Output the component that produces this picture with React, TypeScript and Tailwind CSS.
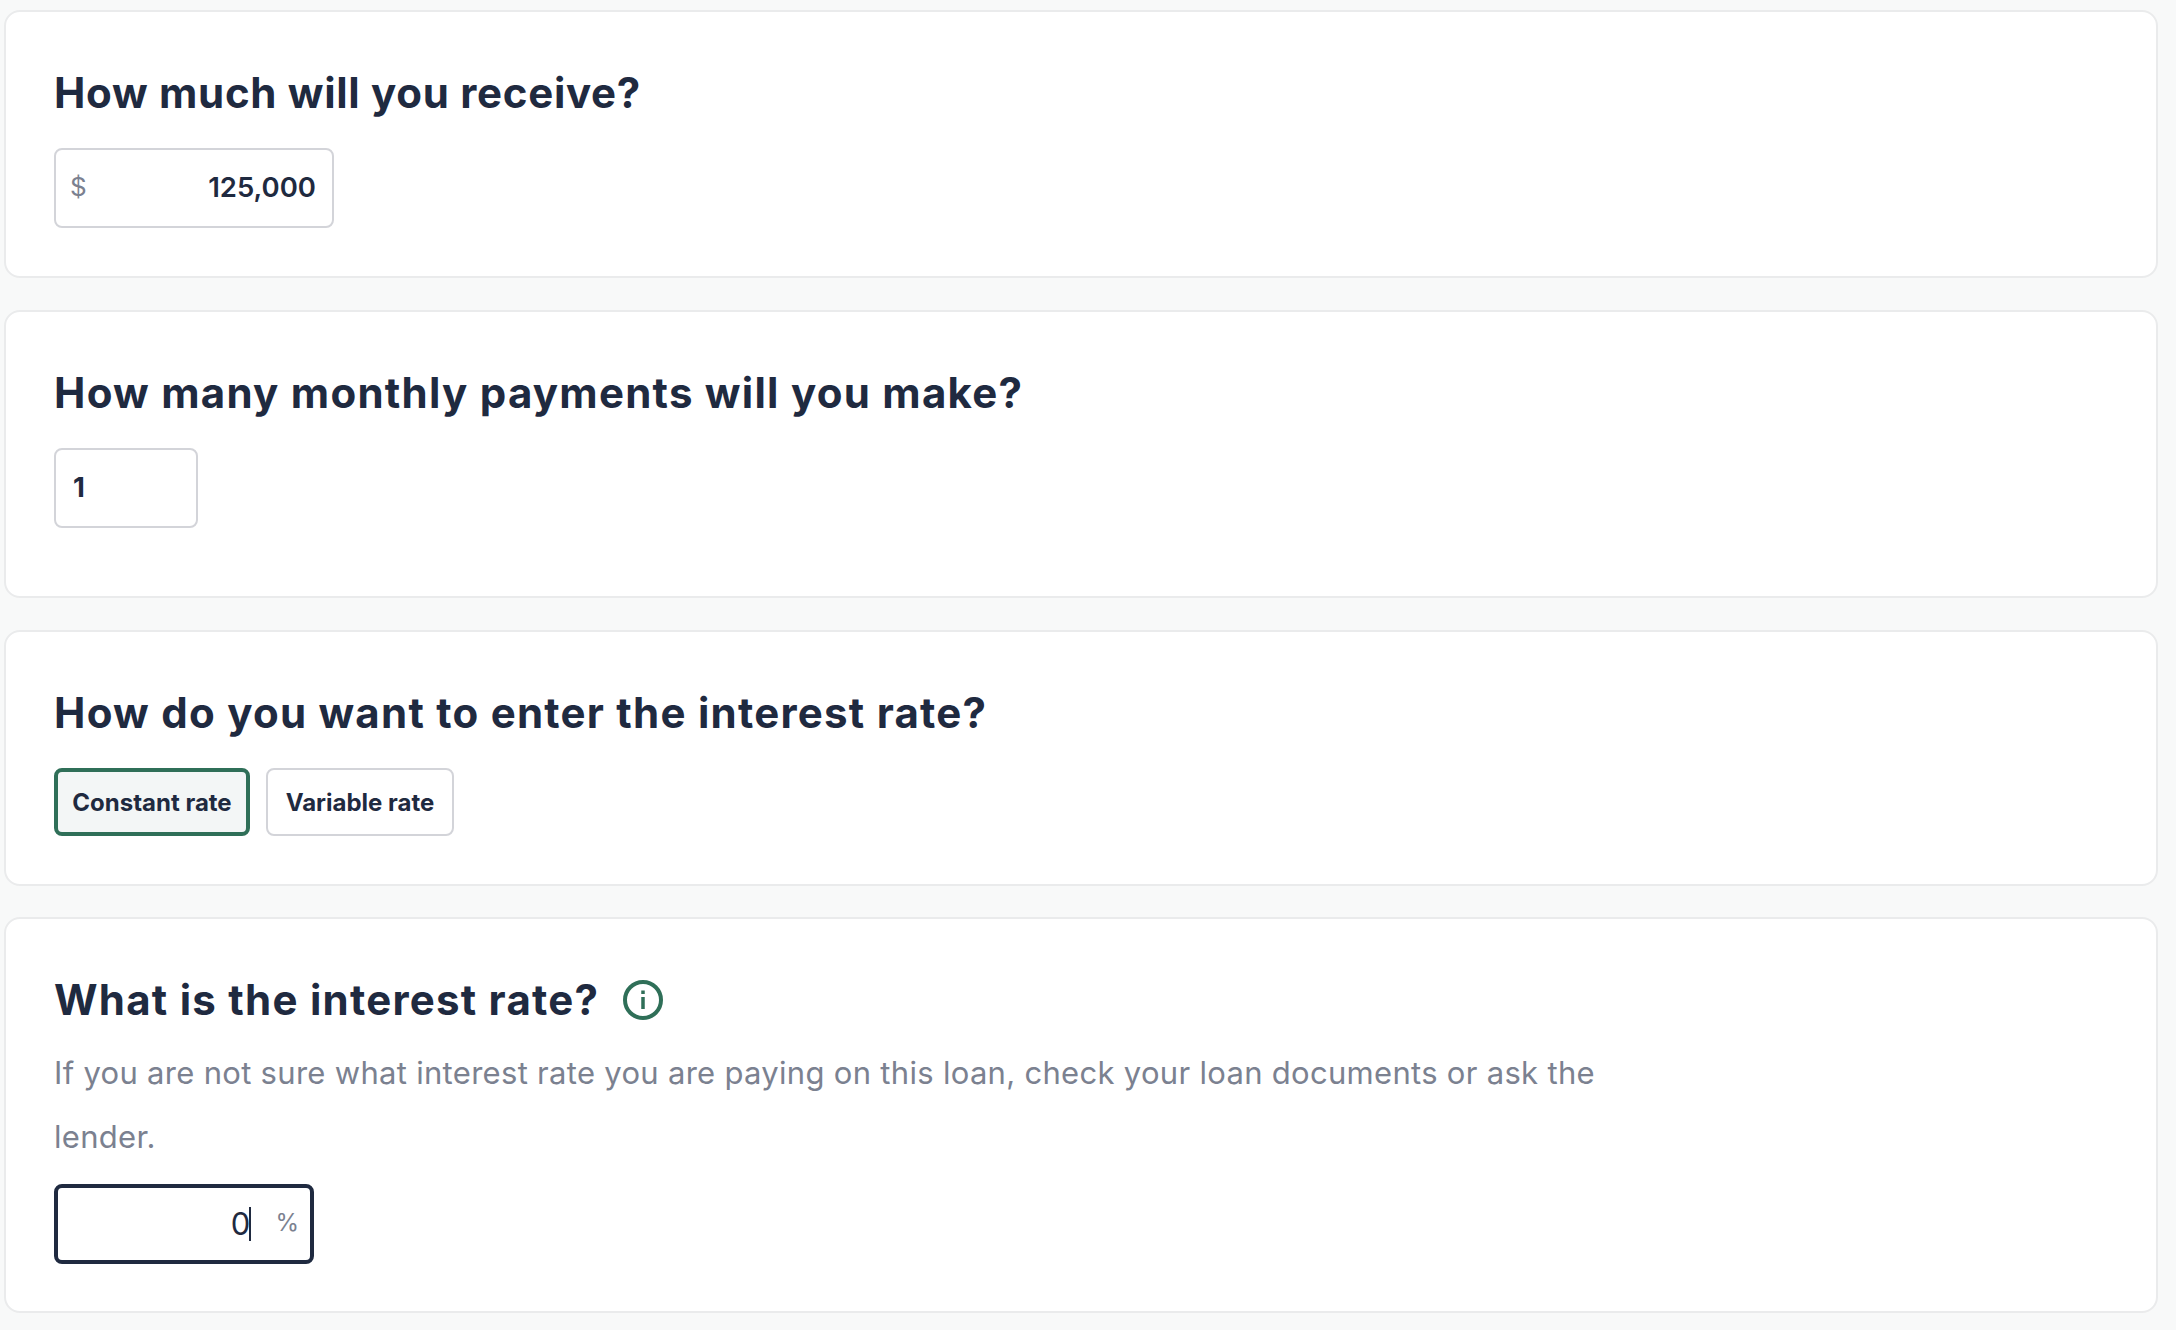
import React from "react";

const font = "font-['Inter','Noto_Sans',sans-serif]";

const Heading: React.FC<{ children: React.ReactNode; tight?: boolean }> = ({ children, tight }) => (
  <h2 className={`text-[42px] leading-[60px] font-bold text-[#1f2a40] ${tight ? "tracking-[0.7px]" : "tracking-[1.25px]"}`}>
    {children}
  </h2>
);

const Card: React.FC<{ className: string; children: React.ReactNode }> = ({ className, children }) => (
  <section className={`rounded-2xl border-2 border-[#eaebec] bg-white pt-[51px] pl-[48px] ${className}`}>{children}</section>
);

export default function App() {
  return (
    <div className={`min-h-screen bg-[#f8f9f9] pt-[10px] pr-[18px] pl-[4px] pb-[16px] ${font}`}>
      <div className="flex flex-col gap-[32px]">
        <Card className="h-[268px]">
          <Heading tight>How much will you receive?</Heading>
          <div className="mt-[25px] flex h-[80px] w-[280px] items-center justify-between rounded-lg border-2 border-[#d3d4d9] pr-[16px] pl-[14px]">
            <span className="mt-[-3px] text-[26px] text-[#7b8190]">$</span>
            <input
              readOnly
              value="125,000"
              className="w-[170px] text-right text-[27.5px] font-semibold text-[#1f2a40] outline-none"
            />
          </div>
        </Card>

        <Card className="h-[288px]">
          <Heading>How many monthly payments will you make?</Heading>
          <div className="mt-[25px] flex h-[80px] w-[144px] items-center rounded-lg border-2 border-[#d3d4d9] pl-[17px]">
            <input readOnly value="1" className="w-full text-[27.5px] font-bold text-[#1f2a40] outline-none" />
          </div>
        </Card>

        <Card className="mb-[-1px] h-[256px]">
          <Heading>How do you want to enter the interest rate?</Heading>
          <div className="mt-[25px] flex gap-[16px]">
            <button className="h-[68px] w-[196px] rounded-lg border-4 border-[#2f6f58] bg-[#f3f6f6] pt-[2px] text-[24px] font-bold text-[#1f2a40]">
              Constant rate
            </button>
            <button className="h-[68px] w-[188px] rounded-lg border-2 border-[#d3d4d9] bg-white pt-[2px] text-[24px] font-bold text-[#1f2a40]">
              Variable rate
            </button>
          </div>
        </Card>

        <Card className="h-[396px]">
          <div className="flex items-center gap-[24px]">
            <Heading>What is the interest rate?</Heading>
            <svg width="40" height="40" viewBox="0 0 40 40" fill="none" className="text-[#2f6f58]">
              <circle cx="20" cy="20" r="18" stroke="currentColor" strokeWidth="4" />
              <rect x="18.25" y="17" width="3.5" height="12" fill="currentColor" />
              <rect x="18.25" y="10.5" width="3.5" height="3.5" fill="currentColor" />
            </svg>
          </div>
          <p className="mt-[11px] max-w-[1560px] text-[31px] leading-[64px] tracking-[0.3px] text-[#7b8190]">
            If you are not sure what interest rate you are paying on this loan, check your loan documents or ask the
            lender.
          </p>
          <div className="mt-[15px] flex h-[80px] w-[260px] items-center justify-end gap-[24px] rounded-lg border-4 border-[#1f2a40] pr-[11px]">
            <span className="flex items-center text-[31px] text-[#1f2a40]">
              0<span className="ml-[-1px] h-[34px] w-[2px] bg-[#1f2a40]" />
            </span>
            <span className="mt-[-2px] text-[24px] text-[#7b8190]">%</span>
          </div>
        </Card>
      </div>
    </div>
  );
}
